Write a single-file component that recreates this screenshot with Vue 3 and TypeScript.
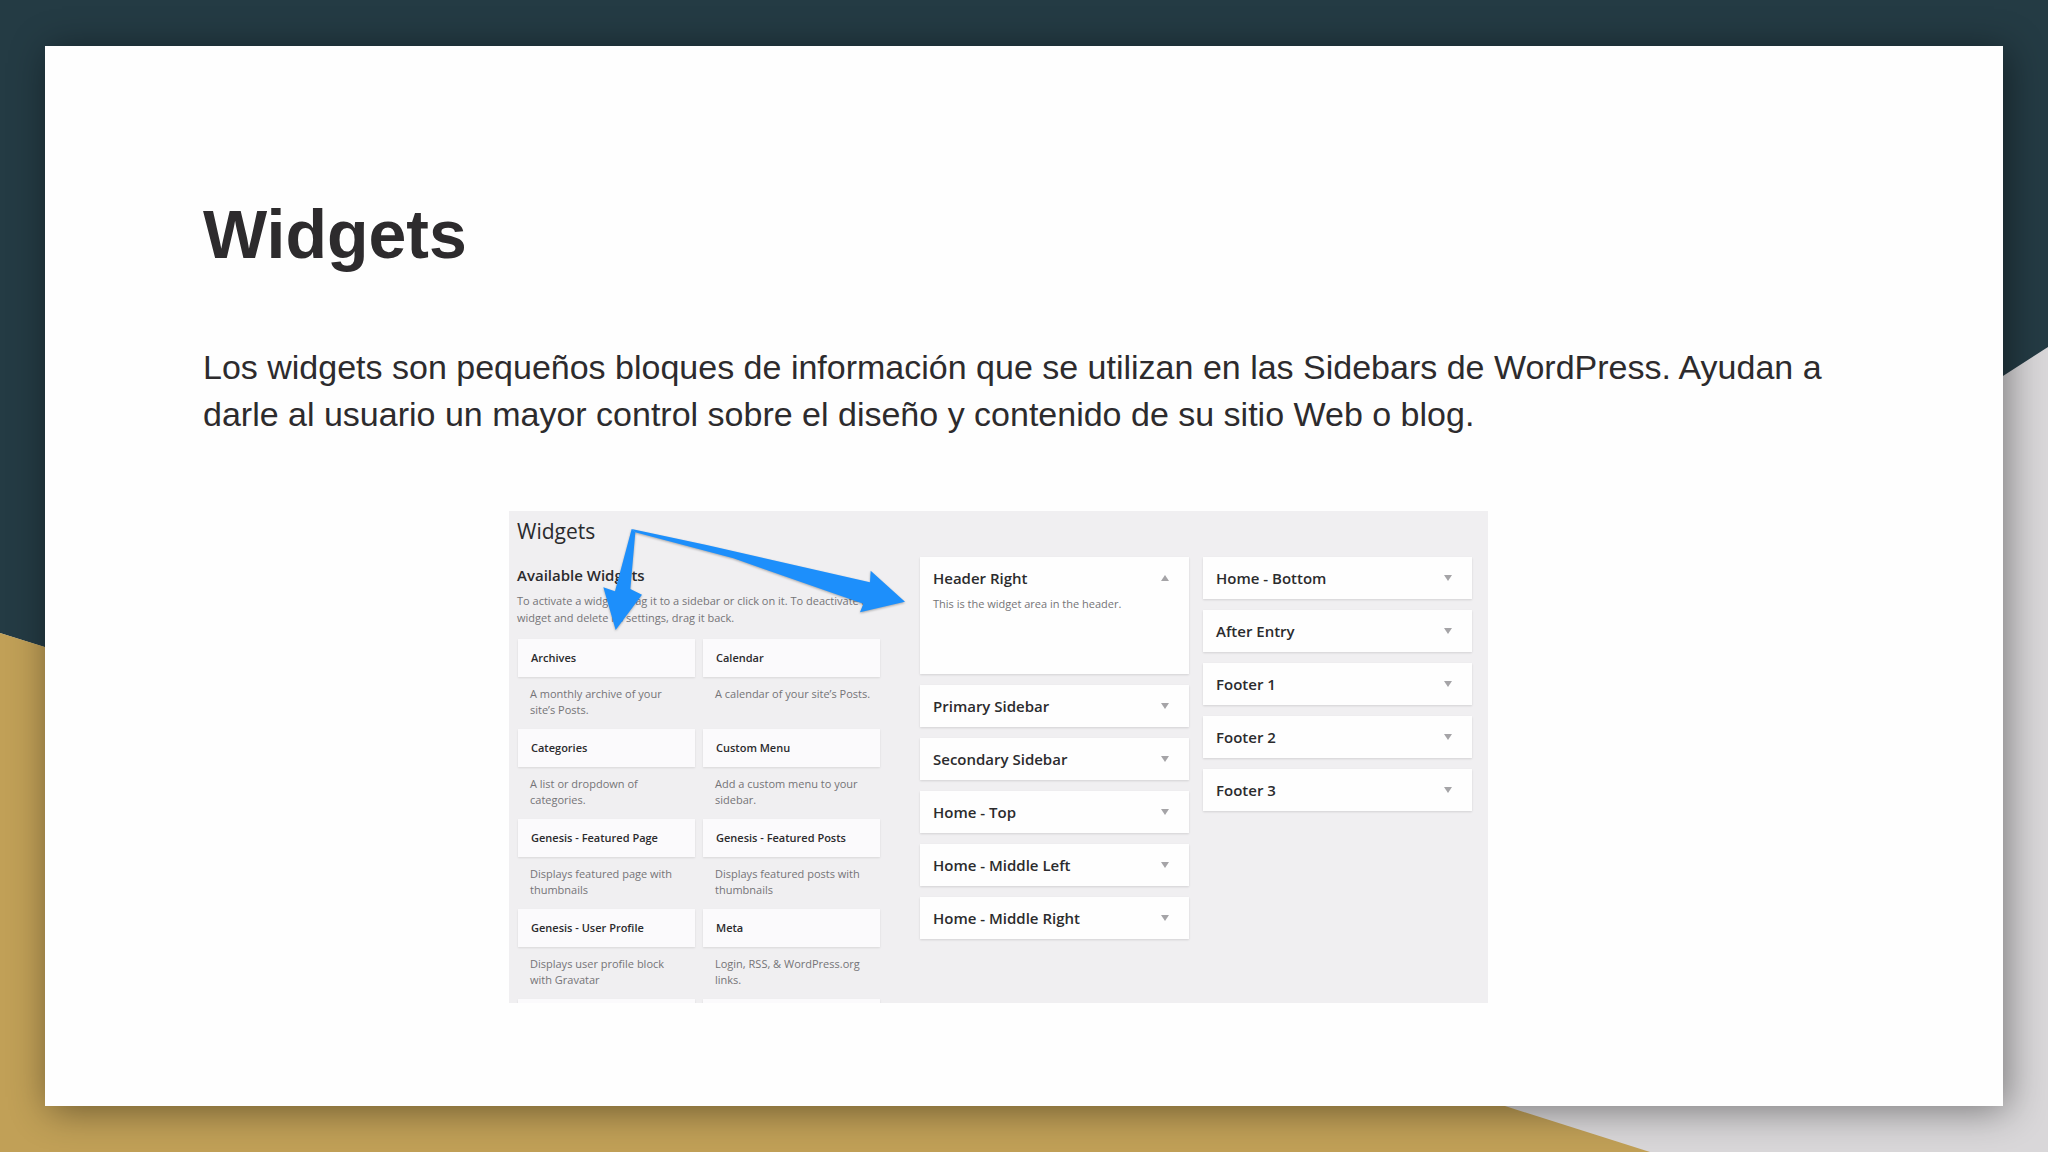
<script setup lang="ts">
import { ref } from 'vue'

interface Widget {
  name: string
  description: string
}

interface Area {
  name: string
  description: string
  open: boolean
}

const area = (name: string, description = '', open = false): Area => ({ name, description, open })

const widgets: Widget[] = [
  { name: 'Archives', description: 'A monthly archive of your\nsite’s Posts.' },
  { name: 'Calendar', description: 'A calendar of your site’s Posts.' },
  { name: 'Categories', description: 'A list or dropdown of\ncategories.' },
  { name: 'Custom Menu', description: 'Add a custom menu to your\nsidebar.' },
  { name: 'Genesis - Featured Page', description: 'Displays featured page with\nthumbnails' },
  { name: 'Genesis - Featured Posts', description: 'Displays featured posts with\nthumbnails' },
  { name: 'Genesis - User Profile', description: 'Displays user profile block\nwith Gravatar' },
  { name: 'Meta', description: 'Login, RSS, & WordPress.org\nlinks.' },
  { name: '', description: '' },
  { name: '', description: '' },
]

const columns = ref<Area[][]>([
  [
    area('Header Right', 'This is the widget area in the header.', true),
    area('Primary Sidebar'),
    area('Secondary Sidebar'),
    area('Home - Top'),
    area('Home - Middle Left'),
    area('Home - Middle Right'),
  ],
  [
    area('Home - Bottom'),
    area('After Entry'),
    area('Footer 1'),
    area('Footer 2'),
    area('Footer 3'),
  ],
])
</script>

<template>
  <div class="slide">
    <svg class="backdrop" viewBox="0 0 2048 1152" preserveAspectRatio="none" aria-hidden="true">
      <rect width="2048" height="1152" fill="#d9d7d9" />
      <path d="M0 0H2048V347L1200 893V1013L0 633Z" fill="#243b44" />
      <path d="M0 633L45 647L1505 1106L1650 1152H0Z" fill="#c1a057" />
    </svg>

    <main class="card">
      <h1>Widgets</h1>
      <p class="lead">
        Los widgets son pequeños bloques de información que se utilizan en las Sidebars de
        WordPress. Ayudan a darle al usuario un mayor control sobre el diseño y contenido de su
        sitio Web o blog.
      </p>

      <section class="admin">
        <div class="available">
          <h2>Widgets</h2>
          <h3>Available Widgets</h3>
          <p class="hint">
            To activate a widget, drag it to a sidebar or click on it. To deactivate a<br />
            widget and delete its settings, drag it back.
          </p>
          <div class="widgets">
            <article v-for="(widget, i) in widgets" :key="i" class="widget">
              <h4>{{ widget.name }}</h4>
              <p>{{ widget.description }}</p>
            </article>
          </div>
        </div>

        <div v-for="(column, i) in columns" :key="i" class="areas">
          <div v-for="item in column" :key="item.name" class="area" :class="{ open: item.open }">
            <button type="button" :aria-expanded="item.open" @click="item.open = !item.open">
              <span>{{ item.name }}</span>
              <svg class="caret" viewBox="0 0 8 6" aria-hidden="true">
                <path :d="item.open ? 'M4 0L8 6H0Z' : 'M0 0H8L4 6Z'" />
              </svg>
            </button>
            <p v-if="item.open">{{ item.description }}</p>
          </div>
        </div>

        <svg class="arrows" viewBox="0 0 2937 1476" aria-hidden="true">
          <path d="M368 54L379 64L364 234L399 251L320 357L283 229L318 241Z" />
          <path d="M368 54L593 102L1083 214L1085 179L1188 272L1053 304L1063 278L673 142L378 64Z" />
        </svg>
      </section>
    </main>
  </div>
</template>

<style>
body {
  margin: 0;
}
</style>

<style scoped>
.slide {
  position: relative;
  display: flex;
  box-sizing: border-box;
  min-height: 100vh;
  padding: 46px 45px;
  font-family: "Liberation Sans", Arial, sans-serif;
  color: #2d2b2d;
}

h1,
h2,
h3,
h4,
p {
  margin: 0;
}

.backdrop {
  position: absolute;
  inset: 0;
  width: 100%;
  height: 100%;
}

.card {
  position: relative;
  flex: 1;
  box-sizing: border-box;
  padding: 149px 158px 103px;
  background: #fefefe;
  box-shadow: 4px 4px 36px rgba(0, 0, 0, 0.45);
}

h1 {
  font-size: 68px;
  line-height: 78px;
}

.lead {
  margin-top: 71px;
  font-size: 34px;
  line-height: 47px;
}

.admin {
  position: relative;
  display: flex;
  box-sizing: border-box;
  width: 979px;
  height: 492px;
  margin: 73px auto 0 306px;
  padding-left: 8px;
  overflow: hidden;
  background: #f0eff1;
  color: #2b2b2d;
  font-family: "Open Sans", sans-serif;
}

.available {
  width: 363px;
  margin-right: 40px;
}

h2 {
  margin-top: 5px;
  font-size: 21px;
  font-weight: 400;
  line-height: 30px;
}

h3 {
  margin-top: 19px;
  font-size: 15px;
  font-weight: 600;
  line-height: 20px;
}

.hint {
  margin-top: 7px;
  color: #757477;
  font-size: 11px;
  line-height: 17px;
  white-space: nowrap;
}

.widgets {
  display: grid;
  grid-template-columns: 177px 177px;
  grid-auto-rows: 90px;
  column-gap: 8px;
  margin: 13px 1px 0;
}

.widget h4 {
  height: 38px;
  padding-left: 13px;
  background: #fbfafc;
  box-shadow: 0 1px 2px rgba(0, 0, 0, 0.1);
  font-size: 11px;
  font-weight: 600;
  line-height: 38px;
}

.widget p {
  padding: 9px 0 0 12px;
  color: #757477;
  font-size: 11px;
  line-height: 16px;
  white-space: pre;
}

.areas {
  display: flex;
  flex-direction: column;
  gap: 11px;
  width: 269px;
  margin: 46px 14px 0 0;
}

.area {
  background: #fefefe;
  box-shadow: 0 1px 2px rgba(0, 0, 0, 0.12);
}

.area.open {
  min-height: 117px;
}

.area button {
  display: flex;
  align-items: center;
  justify-content: space-between;
  width: 100%;
  height: 42px;
  padding: 0 20px 0 13px;
  border: 0;
  background: none;
  color: inherit;
  font: 600 15px/20px "Open Sans", sans-serif;
  cursor: pointer;
}

.caret {
  width: 8px;
  height: 6px;
  fill: #a5a4a7;
}

.area.open p {
  margin-top: -3px;
  padding-left: 13px;
  color: #757477;
  font-size: 11px;
  line-height: 16px;
}

.arrows {
  position: absolute;
  inset: 0;
  width: 100%;
  height: 100%;
  fill: #1d8ffb;
  filter: drop-shadow(0 1px 1px rgba(0, 0, 0, 0.3));
  pointer-events: none;
}
</style>
